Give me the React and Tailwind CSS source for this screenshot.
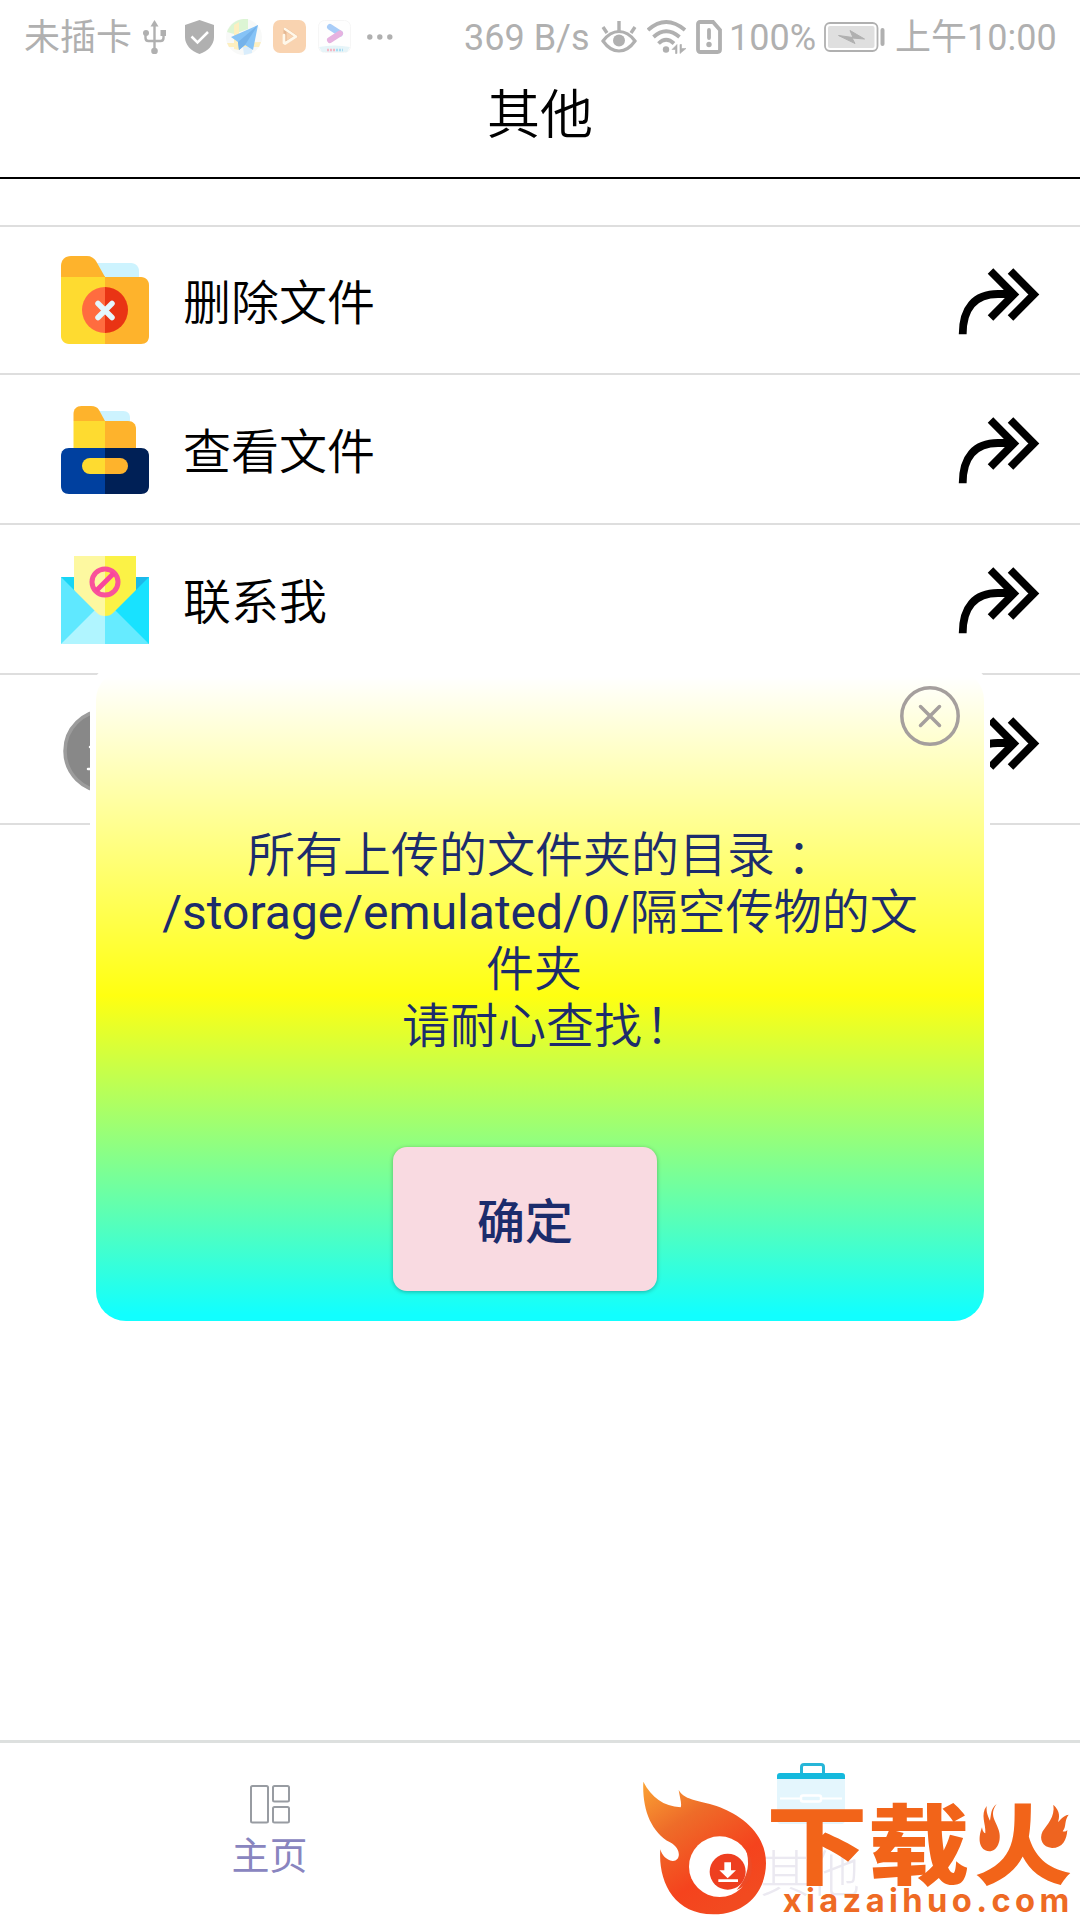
import React from 'react';

const FolderDeleteIcon = () => (
  <svg className="mt-[2px] w-[88px] h-[88px]" viewBox="0 0 88 88">
    <path d="M34 7h36c5 0 8 4 8 8v9H34z" fill="#cdf3fe" />
    <path d="M0 20h44v68H8c-5 0-8-4-8-8z" fill="#fedb30" />
    <path d="M44 21h36c5 0 8 4 8 8v51c0 5-3 8-8 8H44z" fill="#feb32c" />
    <path d="M0 21V10C0 4 4 0 10 0h16c4 0 7 2 9 5l9 16z" fill="#feb32c" />
    <path d="M44 31a23 23 0 0 0 0 46z" fill="#ff6c3f" />
    <path d="M44 31a23 23 0 0 1 0 46z" fill="#e93414" />
    <path d="M37 47.500l14 14M51 47.500l-14 14" stroke="#e4f7fd" strokeWidth="5.500" strokeLinecap="round" />
  </svg>
);

const DrawerIcon = () => (
  <svg className="mt-[4px] w-[88px] h-[88px]" viewBox="0 0 88 88">
    <path d="M36 5h26c5 0 7 3 7 7v6H36z" fill="#cdf3fe" />
    <path d="M12.500 15H44v30H12.500z" fill="#fedb30" />
    <path d="M44 15h23c5 0 8 3 8 8v22H44z" fill="#feb32c" />
    <path d="M12.500 15V8c0-5 3-8 8-8H30c4 0 6 1 8 4l6 11z" fill="#feb32c" />
    <path d="M44 42H8c-5 0-8 3-8 8v30c0 5 3 8 8 8h36z" fill="#00409f" />
    <path d="M44 42h36c5 0 8 3 8 8v30c0 5-3 8-8 8H44z" fill="#002056" />
    <path d="M44 52H29a8 8 0 0 0 0 16h15z" fill="#fedb30" />
    <path d="M44 52h15a8 8 0 0 1 0 16H44z" fill="#feb32c" />
  </svg>
);

const MailIcon = () => (
  <svg className="mt-[4px] w-[88px] h-[88px]" viewBox="0 0 88 88">
    <path d="M0 21h44v67H0z" fill="#5fe8ff" />
    <path d="M44 21h44v67H44z" fill="#18e2ff" />
    <path d="M0 21h14v14z" fill="#18d5f5" />
    <path d="M88 21H74v14z" fill="#1cb8ea" />
    <path d="M0 88l44-44v44z" fill="#b0f5ff" />
    <path d="M88 88L44 44v44z" fill="#66ebff" />
    <path d="M13 0h31v60c-4 0-6-1-9-4L13 34z" fill="#fdf8a0" />
    <path d="M75 0H44v60c4 0 6-1 9-4l22-22z" fill="#fbf246" />
    <circle cx="44" cy="26" r="13" fill="none" stroke="#f9529a" strokeWidth="5" />
    <path d="M35 35l18-18" stroke="#f9459c" strokeWidth="5" />
  </svg>
);

const AboutIcon = () => (
  <svg className="mt-[4px] w-[88px] h-[88px]" viewBox="0 0 88 88">
    <circle cx="44.500" cy="45" r="40.500" fill="#888" stroke="#9c9c9c" strokeWidth="3.500" />
    <path d="M29 41h32M27 63h36" stroke="#fff" strokeWidth="2.500" strokeLinecap="round" />
  </svg>
);

const ForwardIcon = () => (
  <svg className="mt-[4px] w-[84px] h-[68px]" viewBox="958 266 84 68" fill="none" stroke="#000" strokeWidth="7.800">
    <path d="M962.700 333.200C962.700 307 975 293 998 293h16" />
    <path d="M990.500 270l23.300 23.500-23.300 23.500" />
    <path d="M1010.500 270l23.300 23.500-23.300 23.500" />
  </svg>
);

const menuItems = [
  { name: '删除文件', icon: <FolderDeleteIcon /> },
  { name: '查看文件', icon: <DrawerIcon /> },
  { name: '联系我', icon: <MailIcon /> },
  { name: '', icon: <AboutIcon /> },
];

const StatusBar = () => (
  <div className="flex items-center h-[73px] pl-[25px] text-[36px] leading-none text-[#b0b0b0] whitespace-nowrap font-[Roboto,'Noto_Sans_CJK_SC',sans-serif]">
    <span className="w-[108px] mt-[2px] -ml-px mr-px">未插卡</span>
    {/* usb */}
    <svg className="ml-[10px] w-[23px] h-[34px] shrink-0" viewBox="0 0 23 34" fill="none" stroke="#b0b0b0" strokeWidth="2.400">
      <path d="M11.500 5v24M2.500 13v5q0 3 3 3h12q3 0 3-3v-5" />
      <path d="M11.500 0l4 6.500h-8z" fill="#b0b0b0" stroke="none" />
      <circle cx="11.500" cy="31" r="3.300" fill="#b0b0b0" stroke="none" />
      <circle cx="3" cy="13" r="3" fill="#b0b0b0" stroke="none" />
      <path d="M17.500 10h5.500v6h-5.500z" fill="#b0b0b0" stroke="none" />
    </svg>
    {/* shield */}
    <svg className="ml-[19px] w-[29px] h-[34px] shrink-0" viewBox="0 0 29 34">
      <path d="M14.500 0L29 5v12c0 8-6 14-14.500 17C6 31 0 25 0 17V5z" fill="#b0b0b0" />
      <path d="M6.500 16.500l6 6L23 12" fill="none" stroke="#fff" strokeWidth="2.500" />
    </svg>
    {/* map */}
    <svg className="ml-[12px] w-[36px] h-[36px] shrink-0" viewBox="0 0 36 36">
      <circle cx="18" cy="18" r="18" fill="#f8f9f8" />
      <path d="M1 13C4 4 13-1 22 0v10L8 15z" fill="#dcf5d4" />
      <path d="M8 6l5-3v28l-5-1zM1 24l34-1-2 5H3z" fill="#fdefc0" />
      <path d="M17 28l9 0 0 6-8 2z" fill="#d9edfc" />
      <path d="M32 6L5 18l7 5 1 8 6-5 8 5z" fill="#86c3f6" />
      <path d="M32 6L12 23l1 8 6-5z" fill="#74b2ea" />
    </svg>
    {/* player */}
    <svg className="ml-[11px] w-[33px] h-[33px] shrink-0" viewBox="0 0 33 33">
      <rect width="33" height="33" rx="7" fill="#f9d3b0" />
      <path d="M12 9v14l11-6.500z" fill="none" stroke="#e6b994" strokeWidth="3" strokeLinejoin="round" />
      <path d="M11 23V15M12 9l11 7.500L12 23.500" fill="none" stroke="#fff8ea" strokeWidth="2.700" strokeLinecap="round" strokeLinejoin="round" />
    </svg>
    <svg className="ml-[12px] w-[33px] h-[33px] shrink-0" viewBox="0 0 33 33">
      <rect x=".5" y=".5" width="32" height="32" rx="6" fill="#fefefe" stroke="#f6f6f6" />
      <path d="M1 27q15-3 31 0l-3 5H4z" fill="#e6f4f8" />
      <path d="M12 7l10 6.500" stroke="#a9cdf8" strokeWidth="6" strokeLinecap="round" />
      <path d="M22 13.500l-10 6.500" stroke="#e6b2e0" strokeWidth="6" strokeLinecap="round" />
      <path d="M9 30h8" stroke="#f6b6c4" strokeWidth="2.500" strokeDasharray="2 1" />
      <path d="M18 30h7" stroke="#a9dcf2" strokeWidth="2.500" strokeDasharray="2 1" />
    </svg>
    <svg className="ml-[16px] w-[26px] h-[6px] shrink-0" viewBox="0 0 26 6" fill="#b0b0b0">
      <circle cx="2.800" cy="3" r="2.700" />
      <circle cx="12.800" cy="3" r="2.700" />
      <circle cx="22.800" cy="3" r="2.700" />
    </svg>

    <span className="ml-[71px] w-[126px] mt-[3px]">369 B/s</span>
    {/* eye */}
    <svg className="ml-[11px] w-[36px] h-[32px] shrink-0" viewBox="0 0 36 32" fill="none" stroke="#b0b0b0" strokeWidth="3.200">
      <path d="M2 20Q9 10.500 18 10.500T34 20Q27 30 18 30T2 20z" />
      <circle cx="18" cy="19.500" r="6" fill="#b0b0b0" stroke="none" />
      <path d="M18 0v10M2 6l4 6M34 6l-4 6" strokeWidth="3.400" />
    </svg>
    {/* wifi */}
    <svg className="ml-[10px] w-[40px] h-[34px] shrink-0" viewBox="0 0 40 34" fill="none" stroke="#b0b0b0" strokeWidth="3.800">
      <path d="M1 10Q19-6 38 10M6.500 17Q19 5.500 32.500 17M11.500 23.500Q19 16 27 23.500" />
      <circle cx="19" cy="29.500" r="3.200" fill="#b0b0b0" stroke="none" />
      <path d="M25 29.500l5-5v9h-1.500v-4zM33 33.500v-9h1.500v4H39z" fill="#b0b0b0" stroke="#b0b0b0" strokeWidth=".6" />
    </svg>
    {/* sim */}
    <svg className="ml-[9px] w-[26px] h-[34px] shrink-0" viewBox="0 0 26 34" fill="none" stroke="#b0b0b0" strokeWidth="3.800">
      <path d="M4 2h13l7 8v19.500q0 2.500-2.500 2.500H4.500q-2.500 0-2.500-2.500V4q0-2 2-2z" />
      <path d="M13 10v8" strokeLinecap="round" />
      <circle cx="13" cy="24.500" r="2.700" fill="#b0b0b0" stroke="none" />
    </svg>
    <span className="ml-[7px] w-[87px] mt-[3px]">100%</span>
    {/* battery */}
    <svg className="ml-[8px] w-[61px] h-[30px] shrink-0" viewBox="0 0 61 30">
      <rect x="1" y="1" width="52.500" height="28" rx="5" fill="none" stroke="#b0b0b0" strokeWidth="1.800" />
      <rect x="4" y="4" width="46.500" height="22" rx="2" fill="#dfdfdf" />
      <path d="M14.500 13.500L29 15.500 26 8.500l14.500 8.500L28 16l3 5.500z" fill="#b0b0b0" stroke="#b0b0b0" />
      <rect x="56.500" y="6" width="4" height="18" rx="2" fill="#b0b0b0" />
    </svg>
    <span className="ml-[10px] mt-[3px]">上午10:00</span>
  </div>
);

const Dialog = () => (
  <div className="absolute left-[90px] top-[664px] w-[900px] h-[664px] rounded-[30px] bg-white px-[6px] pt-[6px]">
    <div className="flex flex-col h-[651px] rounded-[30px] bg-[linear-gradient(to_bottom,#ffffff_1%,#ffff11_50%,#11ffff_99%)] text-[#1c2c6c]">
      <button className="self-end mt-[16px] mr-[24px] w-[60px] h-[60px]">
        <svg className="w-[60px] h-[60px]" viewBox="0 0 60 60" fill="none" stroke="#a59f9d" strokeWidth="3.500">
          <circle cx="30" cy="30" r="28.200" />
          <path d="M20.500 20.500l19 19M39.500 20.500l-19 19" strokeLinecap="round" />
        </svg>
      </button>
      <div className="mt-[77px] text-center text-[48px] leading-[57px] whitespace-nowrap font-[Roboto,'Noto_Sans_CJK_SC',sans-serif]">
        <p className="pr-[10px] font-[350]">所有上传的文件夹的目录<span className="relative top-[4px] font-['Noto_Sans_CJK_TC',sans-serif]">：</span></p>
        <p>/storage/emulated/0/<span className="font-[350]">隔空传物的文</span></p>
        <p className="pr-[12px] font-[350]">件夹</p>
        <p className="pl-[12px] font-[350]">请耐心查找<span className="relative left-[3px]">！</span></p>
      </div>
      <button className="self-start ml-[297px] mt-[92px] pb-[3px] w-[264px] h-[144px] rounded-[14px] bg-[#f9dae1] shadow-[0_1px_4px_rgba(0,0,0,0.3)] text-[48px] font-medium font-['Noto_Sans_CJK_SC',sans-serif]">
        确定
      </button>
    </div>
  </div>
);

const SiteBadge = () => (
  <svg className="absolute left-[620px] top-[1730px] w-[460px] h-[190px]" viewBox="0 0 1380 570">
    <defs>
      <linearGradient id="flame" x1="0" y1="0" x2=".6" y2="1">
        <stop offset="0" stopColor="#fba334" />
        <stop offset=".35" stopColor="#ee6c29" />
        <stop offset=".75" stopColor="#f5431d" />
        <stop offset="1" stopColor="#f24a20" />
      </linearGradient>
      {/* keeps the trunk and legs, the two side strokes become flames */}
      <clipPath id="trunk">
        <path d="M1166 200h92v148l110 50v90H1050v-90l116-50z" />
      </clipPath>
    </defs>
    <path
      d="M70 155C66 235 92 305 150 337C186 356 182 394 158 393C138 390 126 376 121 358C114 450 158 553 280 553C385 553 438 478 438 400C438 310 365 258 300 232C245 211 195 214 176 180C180 205 186 222 182 232C130 228 95 203 70 155z"
      fill="url(#flame)"
    />
    <ellipse cx="299" cy="410" rx="92" ry="91" fill="#fff" />
    <path d="M375 352Q402 420 350 480Q397 462 396 405Q392 370 375 352z" fill="#ee4a25" />
    <circle cx="323" cy="425" r="54" fill="#ee3f20" />
    <path d="M313 397h20v24h15l-25 24-25-24h15zM295 448h59v8h-59z" fill="#fff" />
    <g className="text-[262px] font-black font-['Noto_Sans_CJK_SC',sans-serif]" fill="#f26419">
      <text x="438" y="443" textLength="610" lengthAdjust="spacingAndGlyphs">下载</text>
      <text x="1062" y="443" textLength="295" lengthAdjust="spacingAndGlyphs" clipPath="url(#trunk)">火</text>
    </g>
    <g fill="#ee6420">
      <path d="M1130 222C1105 255 1130 275 1136 300C1146 330 1132 364 1108 364C1078 362 1072 328 1086 292C1088 305 1092 308 1096 310C1098 280 1080 255 1100 228C1098 250 1106 262 1110 272C1114 252 1112 236 1130 222z" />
      <path d="M1300 224C1322 245 1318 262 1314 276C1322 270 1326 258 1346 254C1332 272 1340 290 1328 304C1334 306 1338 304 1342 300C1340 330 1328 354 1296 354C1268 352 1256 328 1268 304C1280 284 1306 262 1300 224z" />
    </g>
    <text x="488" y="545" textLength="860" lengthAdjust="spacing" className="text-[98px] font-bold font-[Inter,sans-serif]" fill="#ee6a24">
      xiazaihuo.com
    </text>
  </svg>
);

const BottomNav = () => (
  <div className="absolute inset-x-0 bottom-0 h-[180px] flex border-t-[3px] border-[#dde0df]">
    <div className="w-1/2 flex flex-col items-center pt-[42px]">
      <svg className="w-[40px] h-[39px]" viewBox="0 0 40 39" fill="none" stroke="#989ca2" strokeWidth="2">
        <rect x="1" y="1" width="17" height="36.500" rx="1.500" />
        <rect x="23" y="1" width="16" height="15.500" rx="1.500" />
        <rect x="23" y="22" width="16" height="15.500" rx="1.500" />
      </svg>
      <span className="mt-[9px] mr-px text-[38px] leading-[40px] text-[#8985bf] font-['Noto_Sans_CJK_SC',sans-serif]">主页</span>
    </div>
    <div className="w-1/2 flex flex-col items-center pt-[20px]">
      <svg className="w-[68px] h-[62px] ml-px" viewBox="0 0 68 62">
        <path d="M0 14h68v43q0 4-4 4H4q-4 0-4-4z" fill="#e4f6fd" />
        <path d="M3 35.500h21M44 35.500h21" stroke="#fff" strokeWidth="2" />
        <rect x="24" y="32.500" width="20" height="6" rx="2" fill="none" stroke="#fff" strokeWidth="2.500" />
        <path d="M24.500 11V4q0-2.500 2.500-2.500h17q2.500 0 2.500 2.500v7" fill="none" stroke="#27b6d8" strokeWidth="3" />
        <path d="M0 16v-3q0-3 3-3h62q3 0 3 3v3z" fill="#14b9dd" />
      </svg>
      <span className="mt-[20px] text-[50px] leading-[50px] font-light text-[#ebe9f1] font-['Noto_Sans_CJK_SC',sans-serif]">其他</span>
    </div>
  </div>
);

const App = () => {
  return (
    <div className="relative w-[1080px] h-[1920px] overflow-hidden bg-white">
      <StatusBar />
      <header className="h-[106px] border-b-2 border-black flex justify-center pt-[12px]">
        <h1 className="text-[53px] leading-[53px] text-black font-[350] font-['Noto_Sans_CJK_SC',sans-serif]">其他</h1>
      </header>

      <ul className="mt-[46px] border-t-2 border-[#dedede]">
        {menuItems.map((item, index) => (
          <li
            key={index}
            className="flex items-center h-[150px] first:h-[148px] pl-[61px] pr-[38px] pb-[2px] border-b-2 border-[#dedede]"
          >
            {item.icon}
            <span className="ml-[34px] flex-1 text-[48px] leading-[48px] text-black font-[350] font-['Noto_Sans_CJK_SC',sans-serif]">
              {item.name}
            </span>
            <ForwardIcon />
          </li>
        ))}
      </ul>

      <BottomNav />
      <Dialog />
      <SiteBadge />
    </div>
  );
};

export default App;
